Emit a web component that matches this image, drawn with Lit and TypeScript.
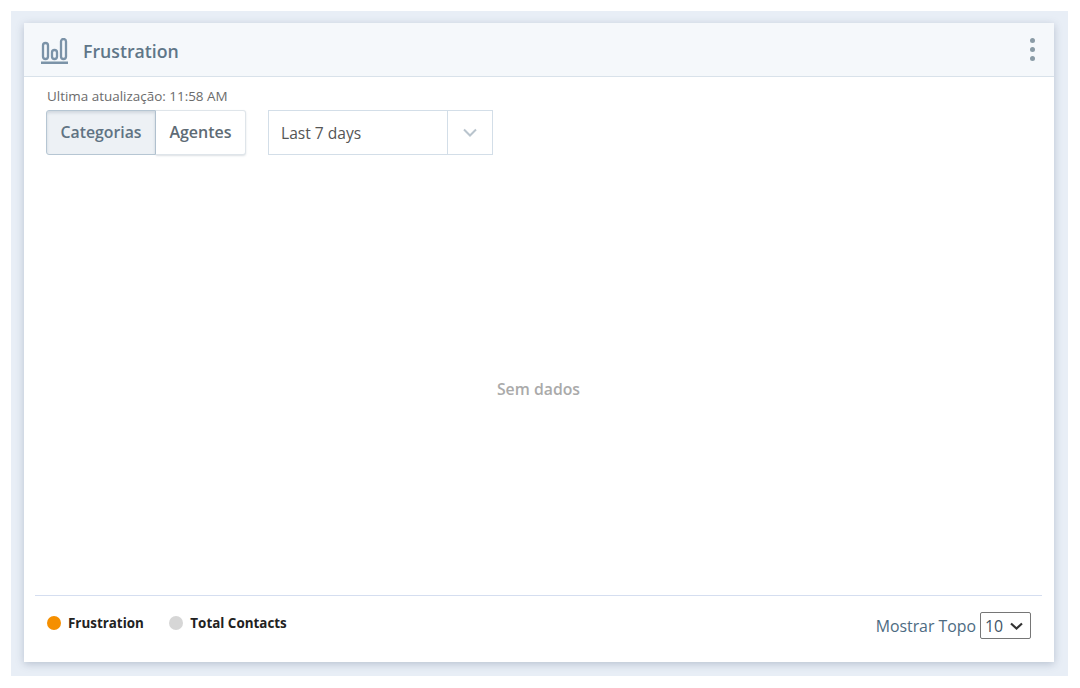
import { LitElement, html, css } from "lit";
import { customElement } from "lit/decorators.js";

@customElement("app-root")
export class AppRoot extends LitElement {
  static styles = css`
    :host {
      display: block;
      width: 1080px;
      height: 688px;
      padding: 11px 12px 12px 11px;
      box-sizing: border-box;
      font-family: "Open Sans", sans-serif;
      background: #fff;
    }
    .frame {
      height: 100%;
      box-sizing: border-box;
      padding: 12px 14px 14px 13px;
      background: #e8eef6;
    }
    .card {
      height: 100%;
      background: #fff;
      display: flex;
      flex-direction: column;
      box-shadow: 0 2px 8px rgba(60, 80, 110, 0.28);
    }
    .head {
      height: 54px;
      flex: none;
      box-sizing: border-box;
      display: flex;
      align-items: center;
      background: #f5f8fb;
      border-bottom: 1px solid #d9e2ea;
      padding: 3px 19px 0 17px;
    }
    .head svg.logo {
      display: block;
      margin-right: 15px;
    }
    .title {
      flex: 1;
      font-size: 17.7px;
      font-weight: 600;
      color: #5f7688;
      line-height: 24px;
    }
    .dots {
      display: flex;
      flex-direction: column;
      gap: 3.7px;
      margin-bottom: 3px;
    }
    .dots i {
      display: block;
      width: 5px;
      height: 5px;
      border-radius: 50%;
      background: #8a9ba6;
    }
    .body {
      flex: 1;
      display: flex;
      flex-direction: column;
      padding: 0 12px 0 11px;
      min-height: 0;
    }
    .updated {
      font-size: 13.45px;
      line-height: 18px;
      color: #6b6b6b;
      margin: 10px 0 0 12px;
      height: 15px;
    }
    .controls {
      display: flex;
      align-items: flex-start;
      margin: 8px 0 0 11px;
    }
    .seg {
      display: flex;
      height: 45px;
      box-sizing: border-box;
      margin-right: 22px;
      font-size: 16px;
      font-weight: 600;
      color: #5e6b75;
    }
    .seg span {
      display: flex;
      align-items: center;
      box-sizing: border-box;
      padding-bottom: 2px;
    }
    .seg .on {
      width: 110px;
      justify-content: center;
      background: #edf1f5;
      border: 1px solid #b6c6d3;
      border-radius: 3px 0 0 3px;
      box-shadow: inset 0 2px 3px rgba(80, 100, 120, 0.18);
      color: #607383;
      font-size: 15.8px;
    }
    .seg .off {
      width: 90px;
      justify-content: center;
      background: #fff;
      border: 1px solid #dfe5ea;
      border-left: none;
      border-radius: 0 3px 3px 0;
      box-shadow: 0 1px 2px rgba(80, 100, 120, 0.2);
    }
    .range {
      width: 225px;
      height: 45px;
      box-sizing: border-box;
      border: 1px solid #d3dee8;
      display: flex;
      align-items: center;
      font-size: 15.6px;
      color: #555;
      background: #fff;
    }
    .range .val {
      flex: 1;
      padding-left: 12px;
    }
    .range .arrow {
      width: 45px;
      height: 43px;
      box-sizing: border-box;
      border-left: 1px solid #d3dee8;
      display: flex;
      align-items: center;
      justify-content: center;
    }
    .empty {
      flex: 1;
      display: flex;
      align-items: center;
      justify-content: center;
      font-size: 15.8px;
      font-weight: 600;
      color: #aaaaaa;
      padding-top: 28px;
    }
    .foot {
      height: 67px;
      flex: none;
      box-sizing: border-box;
      border-top: 1px solid #d5def0;
      display: flex;
      align-items: flex-start;
      padding: 0 11px 0 11.5px;
    }
    .legend {
      display: flex;
      align-items: center;
      margin-top: 18px;
      font-size: 13.4px;
      font-weight: 700;
      color: #222;
      line-height: 18px;
    }
    .legend b {
      display: block;
      width: 14px;
      height: 14px;
      border-radius: 50%;
      margin-right: 7.5px;
    }
    .legend span {
      margin-right: 25px;
    }
    .o { background: #f58f00; }
    .g { background: #d6d6d6; }
    .top {
      margin-left: auto;
      margin-top: 16px;
      display: flex;
      align-items: center;
      font-size: 15.85px;
      color: #4d6b82;
    }
    .sel {
      margin-left: 4px;
      width: 51px;
      height: 27px;
      box-sizing: border-box;
      border: 1px solid #767676;
      border-radius: 2px;
      display: flex;
      align-items: center;
      justify-content: space-between;
      padding: 0 7px 0 4px;
      color: #3f5568;
    }
  `;

  render() {
    return html`
      <div class="frame">
        <div class="card">
          <div class="head">
            <svg class="logo" width="27" height="26" viewBox="0 0 27 26" fill="none">
              <rect x="2" y="5" width="5" height="16" rx="2.5" stroke="#7b93a8" stroke-width="2.3"/>
              <rect x="11" y="12" width="5" height="9" rx="2.5" stroke="#7b93a8" stroke-width="2.3"/>
              <rect x="20" y="1" width="5" height="20" rx="2.5" stroke="#7b93a8" stroke-width="2.3"/>
              <rect x="0" y="23.5" width="27" height="2.5" fill="#7b93a8"/>
            </svg>
            <div class="title">Frustration</div>
            <div class="dots"><i></i><i></i><i></i></div>
          </div>
          <div class="body">
            <div class="updated">Ultima atualização: 11:58 AM</div>
            <div class="controls">
              <div class="seg">
                <span class="on">Categorias</span>
                <span class="off">Agentes</span>
              </div>
              <div class="range">
                <div class="val">Last 7 days</div>
                <div class="arrow">
                  <svg width="14" height="9" viewBox="0 0 14 9" fill="none">
                    <path d="M1 1.5 7 7.5 13 1.5" stroke="#b9c4cd" stroke-width="2"/>
                  </svg>
                </div>
              </div>
            </div>
            <div class="empty">Sem dados</div>
            <div class="foot">
              <div class="legend">
                <b class="o"></b><span>Frustration</span>
                <b class="g"></b><span>Total Contacts</span>
              </div>
              <div class="top">
                Mostrar Topo
                <div class="sel">
                  10
                  <svg width="13" height="8" viewBox="0 0 13 8" fill="none">
                    <path d="M1 1.5 6.5 6.5 12 1.5" stroke="#333" stroke-width="2.2"/>
                  </svg>
                </div>
              </div>
            </div>
          </div>
        </div>
      </div>
    `;
  }
}
